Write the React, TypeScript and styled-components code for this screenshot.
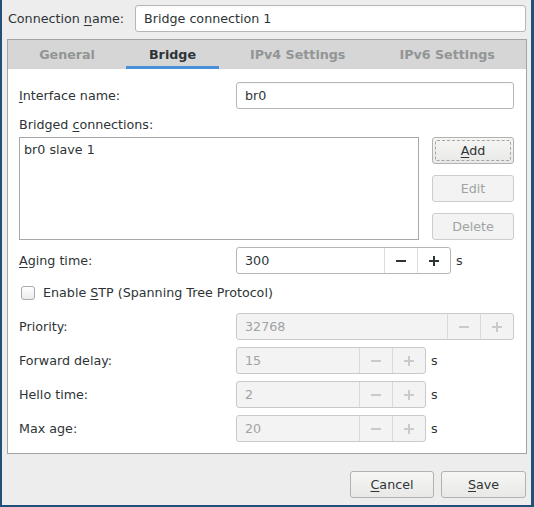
import React from "react";
import styled, { createGlobalStyle, css } from "styled-components";

const Global = createGlobalStyle`
  html, body { margin: 0; padding: 0; }
  body {
    background: #21507a;
    font-family: "DejaVu Sans", "Liberation Sans", sans-serif;
    font-size: 12.7px;
    color: #2e3436;
  }
  * { box-sizing: border-box; }
`;

const Window = styled.div`
  margin: 0 3px 0 2px;
  height: 505px;
  background: #ededed;
  display: flex;
  flex-direction: column;
`;

const TopRow = styled.div`
  display: flex;
  align-items: center;
  padding: 5px 5px 0 6px;
`;

const Label = styled.div<{ $w?: number }>`
  flex: ${(p) => (p.$w ? "none" : "1")};
  width: ${(p) => (p.$w ? `${p.$w}px` : "auto")};
  line-height: 17px;
  white-space: nowrap;
  color: #2e3436;
`;

const TextInput = styled.div<{ $w: number }>`
  width: ${(p) => p.$w}px;
  height: 27px;
  border: 1px solid #b6b6b3;
  border-radius: 3px;
  background: linear-gradient(#f8f8f8, #ffffff 3px);
  padding: 0 8px;
  display: flex;
  align-items: center;
  white-space: nowrap;
  color: #2e3436;
`;

const Notebook = styled.div`
  margin: 7px 4px 0 5px;
  border: 1px solid #a4a4a4;
  background: #ffffff;
`;

const TabBar = styled.div`
  height: 29px;
  background: #d6d6d6;
  display: flex;
  justify-content: center;
`;

const Tab = styled.div<{ $active?: boolean }>`
  margin: 0 4.5px;
  padding: 3px 22.5px 0;
  display: flex;
  align-items: center;
  font-weight: bold;
  color: ${(p) => (p.$active ? "#2e3436" : "#929595")};
  border-bottom: 3px solid ${(p) => (p.$active ? "#4a90d9" : "transparent")};
  white-space: nowrap;
`;

const Page = styled.div`
  padding: 13px 12px 11px 11px;
  display: flex;
  flex-direction: column;
`;

const Row = styled.div<{ $mt?: number }>`
  display: flex;
  align-items: center;
  margin-top: ${(p) => p.$mt ?? 0}px;
`;

const SubLabel = styled.div`
  margin-top: 7px;
  line-height: 17px;
  margin-bottom: 4px;
`;

const ListArea = styled.div`
  display: flex;
  height: 103px;
  gap: 13px;
`;

const ListBox = styled.div`
  width: 400px;
  border: 1px solid #a8a8a8;
  background: #fff;
  padding: 4px 4px;
  line-height: 15px;
`;

const ButtonColumn = styled.div`
  display: flex;
  flex-direction: column;
  gap: 11px;
  width: 82px;
`;

const Button = styled.div<{ $disabled?: boolean; $focus?: boolean; $w?: number }>`
  position: relative;
  height: 27px;
  width: ${(p) => (p.$w ? `${p.$w}px` : "100%")};
  border: 1px solid ${(p) => (p.$disabled ? "#cdcdcd" : "#b2b2b0")};
  border-radius: 3px;
  background: ${(p) =>
    p.$disabled ? "#f3f3f3" : "linear-gradient(#f6f6f5, #e8e8e7)"};
  color: ${(p) => (p.$disabled ? "#a0a3a3" : "#2e3436")};
  display: flex;
  align-items: center;
  justify-content: center;
  ${(p) =>
    p.$focus &&
    css`
      &::after {
        content: "";
        position: absolute;
        inset: 2px;
        border: 1px dashed #a4a6a6;
        border-radius: 2px;
      }
    `}
`;

const U = styled.span`
  text-decoration: underline;
  text-underline-offset: 2px;
`;

const Spin = styled.div<{ $w: number; $disabled?: boolean }>`
  width: ${(p) => p.$w}px;
  height: 27px;
  display: flex;
  border: 1px solid ${(p) => (p.$disabled ? "#c9c9c7" : "#b6b6b3")};
  border-radius: 3px;
  background: ${(p) => (p.$disabled ? "#f3f3f3" : "#ffffff")};
  color: ${(p) => (p.$disabled ? "#a0a3a3" : "#2e3436")};
  overflow: hidden;
`;

const SpinEntry = styled.div`
  flex: 1;
  display: flex;
  align-items: center;
  padding-left: 8px;
`;

const SpinBtn = styled.div<{ $disabled?: boolean }>`
  width: 33px;
  border-left: 1px solid ${(p) => (p.$disabled ? "#dadada" : "#dcdcdc")};
  display: flex;
  align-items: center;
  justify-content: center;
`;

const Unit = styled.div`
  margin-left: 5px;
  line-height: 17px;
`;

const CheckRow = styled.div`
  display: flex;
  align-items: center;
  margin-top: 10px;
  height: 17px;
  padding-left: 2px;
`;

const CheckBox = styled.div`
  width: 14px;
  height: 14px;
  border: 1px solid #a9a9a9;
  border-radius: 3px;
  background: linear-gradient(#ffffff, #ececec);
  margin-right: 8px;
`;

const Footer = styled.div`
  flex: 1;
  display: flex;
  align-items: flex-end;
  justify-content: flex-end;
  gap: 7px;
  padding: 0 5px 7px 0;
`;

const Sign = ({ plus, disabled }: { plus?: boolean; disabled?: boolean }) => (
  <svg width="10" height="10" viewBox="0 0 10 10">
    <rect x="0" y="4" width="10" height="2" fill={disabled ? "#c9cbcb" : "#2e3436"} />
    {plus && <rect x="4" y="0" width="2" height="10" fill={disabled ? "#c9cbcb" : "#2e3436"} />}
  </svg>
);

const SpinField = ({
  label,
  value,
  width,
  disabled,
  unit,
  mt,
}: {
  label: React.ReactNode;
  value: string;
  width: number;
  disabled?: boolean;
  unit?: boolean;
  mt: number;
}) => (
  <Row $mt={mt}>
    <Label $w={217}>{label}</Label>
    <Spin $w={width} $disabled={disabled}>
      <SpinEntry>{value}</SpinEntry>
      <SpinBtn $disabled={disabled}>
        <Sign disabled={disabled} />
      </SpinBtn>
      <SpinBtn $disabled={disabled}>
        <Sign plus disabled={disabled} />
      </SpinBtn>
    </Spin>
    {unit && <Unit>s</Unit>}
  </Row>
);

export default function App() {
  return (
    <>
      <Global />
      <Window>
        <TopRow>
          <Label>
            Connection <U>n</U>ame:
          </Label>
          <TextInput $w={391}>Bridge connection 1</TextInput>
        </TopRow>
        <Notebook>
          <TabBar>
            <Tab>General</Tab>
            <Tab $active>Bridge</Tab>
            <Tab>IPv4 Settings</Tab>
            <Tab>IPv6 Settings</Tab>
          </TabBar>
          <Page>
            <Row>
              <Label $w={217}>
                <U>I</U>nterface name:
              </Label>
              <TextInput $w={278}>br0</TextInput>
            </Row>
            <SubLabel>
              Bridged <U>c</U>onnections:
            </SubLabel>
            <ListArea>
              <ListBox>br0 slave 1</ListBox>
              <ButtonColumn>
                <Button $focus>
                  <span>
                    <U>A</U>dd
                  </span>
                </Button>
                <Button $disabled>Edit</Button>
                <Button $disabled>Delete</Button>
              </ButtonColumn>
            </ListArea>
            <SpinField
              mt={7}
              label={
                <>
                  <U>A</U>ging time:
                </>
              }
              value="300"
              width={215}
              unit
            />
            <CheckRow>
              <CheckBox />
              <span>
                Enable <U>S</U>TP (Spanning Tree Protocol)
              </span>
            </CheckRow>
            <SpinField mt={12} label="Priority:" value="32768" width={278} disabled />
            <SpinField mt={7} label="Forward delay:" value="15" width={190} disabled unit />
            <SpinField mt={7} label="Hello time:" value="2" width={190} disabled unit />
            <SpinField mt={7} label="Max age:" value="20" width={190} disabled unit />
          </Page>
        </Notebook>
        <Footer>
          <Button $w={84}>
            <span>
              <U>C</U>ancel
            </span>
          </Button>
          <Button $w={85}>
            <span>
              <U>S</U>ave
            </span>
          </Button>
        </Footer>
      </Window>
    </>
  );
}
